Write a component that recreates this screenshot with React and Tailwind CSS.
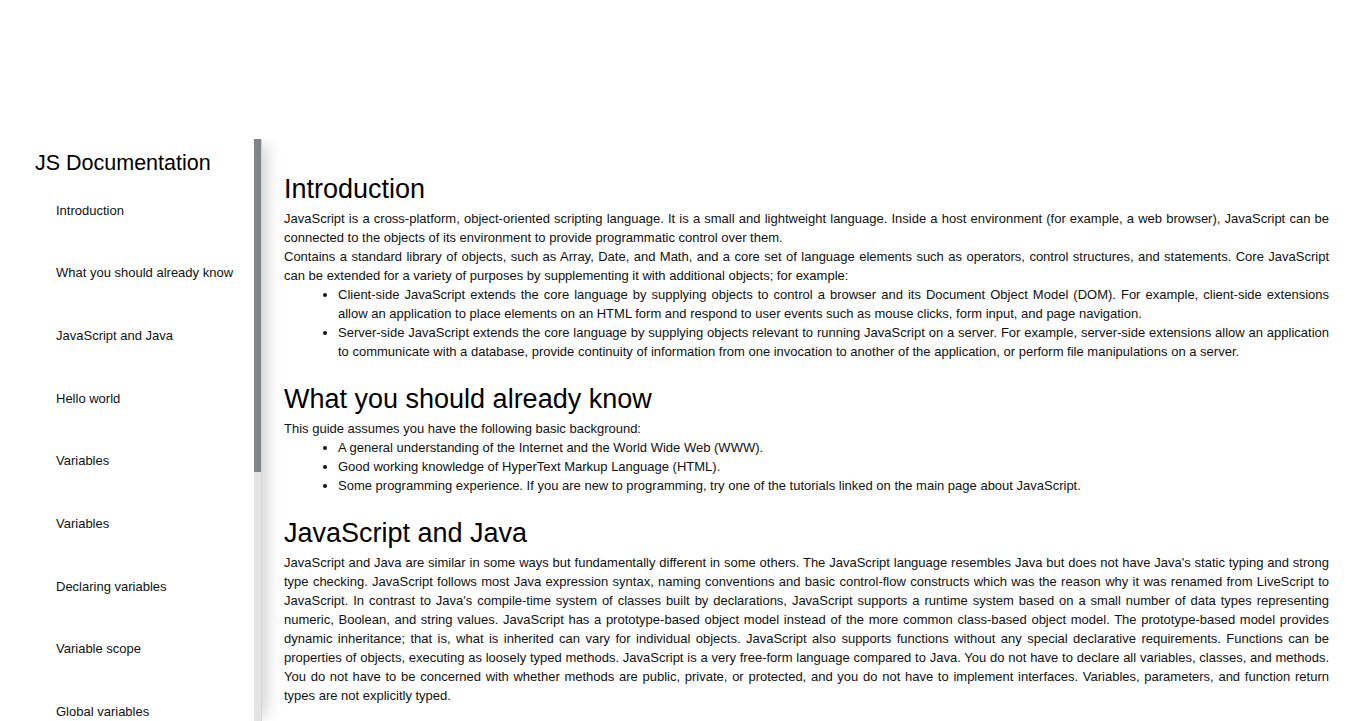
import React from "react";

const navItems = [
  "Introduction",
  "What you should already know",
  "JavaScript and Java",
  "Hello world",
  "Variables",
  "Variables",
  "Declaring variables",
  "Variable scope",
  "Global variables",
  "Constants",
  "Data types",
  "if...else statement",
  "while statement",
  "Function declarations",
  "Reference",
];

function Section({ title, children }) {
  return (
    <section className="mb-[23px]">
      <h2 className="text-[27px] leading-[31px] mb-[4px] text-black">{title}</h2>
      <div className="text-[13px] leading-[19px] text-[#111] text-justify">{children}</div>
    </section>
  );
}

function Bullets({ items }) {
  return (
    <ul className="list-disc pl-[54px]">
      {items.map((item, i) => (
        <li key={i} className="text-justify">{item}</li>
      ))}
    </ul>
  );
}

export default function App() {
  return (
    <div className="flex h-screen overflow-hidden bg-white pt-[139px] font-['Liberation_Sans',Arial,sans-serif] text-black">
      <nav className="relative z-10 flex w-[262px] h-[582px] shrink-0 bg-white shadow-[10px_0_16px_-6px_rgba(0,0,0,0.2)] [clip-path:inset(0_-40px_0_0)]">
        <div className="w-[254px] overflow-hidden">
          <header className="h-[40px] pt-[12px] pl-[35px] text-[21.5px] leading-[25px] text-black">
            JS Documentation
          </header>
          <ul className="pb-[37px]">
            {navItems.map((item, i) => (
              <li key={i} className="h-[62.67px] flex items-center pl-[56px] text-[13px] text-[#111]">
                <a href="#">{item}</a>
              </li>
            ))}
          </ul>
        </div>
        {/* scrollbar */}
        <div className="w-[8px] h-full bg-[#e4e4e4] border-r border-[#d6d6d6]">
          <div className="h-[333px] bg-[#808387]" />
        </div>
      </nav>

      <main className="flex-1 pl-[22px] pr-[31px] pt-[35px]">
        <Section title="Introduction">
          <p>
            JavaScript is a cross-platform, object-oriented scripting language. It is a small and lightweight language. Inside a host environment (for example, a web browser), JavaScript can be connected to the objects of its environment to provide programmatic control over them.
          </p>
          <p>
            Contains a standard library of objects, such as Array, Date, and Math, and a core set of language elements such as operators, control structures, and statements. Core JavaScript can be extended for a variety of purposes by supplementing it with additional objects; for example:
          </p>
          <Bullets
            items={[
              "Client-side JavaScript extends the core language by supplying objects to control a browser and its Document Object Model (DOM). For example, client-side extensions allow an application to place elements on an HTML form and respond to user events such as mouse clicks, form input, and page navigation.",
              "Server-side JavaScript extends the core language by supplying objects relevant to running JavaScript on a server. For example, server-side extensions allow an application to communicate with a database, provide continuity of information from one invocation to another of the application, or perform file manipulations on a server.",
            ]}
          />
        </Section>

        <Section title="What you should already know">
          <p>This guide assumes you have the following basic background:</p>
          <Bullets
            items={[
              "A general understanding of the Internet and the World Wide Web (WWW).",
              "Good working knowledge of HyperText Markup Language (HTML).",
              "Some programming experience. If you are new to programming, try one of the tutorials linked on the main page about JavaScript.",
            ]}
          />
        </Section>

        <Section title="JavaScript and Java">
          <p>
            JavaScript and Java are similar in some ways but fundamentally different in some others. The JavaScript language resembles Java but does not have Java's static typing and strong type checking. JavaScript follows most Java expression syntax, naming conventions and basic control-flow constructs which was the reason why it was renamed from LiveScript to JavaScript. In contrast to Java's compile-time system of classes built by declarations, JavaScript supports a runtime system based on a small number of data types representing numeric, Boolean, and string values. JavaScript has a prototype-based object model instead of the more common class-based object model. The prototype-based model provides dynamic inheritance; that is, what is inherited can vary for individual objects. JavaScript also supports functions without any special declarative requirements. Functions can be properties of objects, executing as loosely typed methods. JavaScript is a very free-form language compared to Java. You do not have to declare all variables, classes, and methods. You do not have to be concerned with whether methods are public, private, or protected, and you do not have to implement interfaces. Variables, parameters, and function return types are not explicitly typed.
          </p>
        </Section>

        <Section title="Hello world">
          <p>
            To get started with writing JavaScript, open the Scratchpad and write your first "Hello world" JavaScript code:
          </p>
        </Section>
      </main>
    </div>
  );
}
